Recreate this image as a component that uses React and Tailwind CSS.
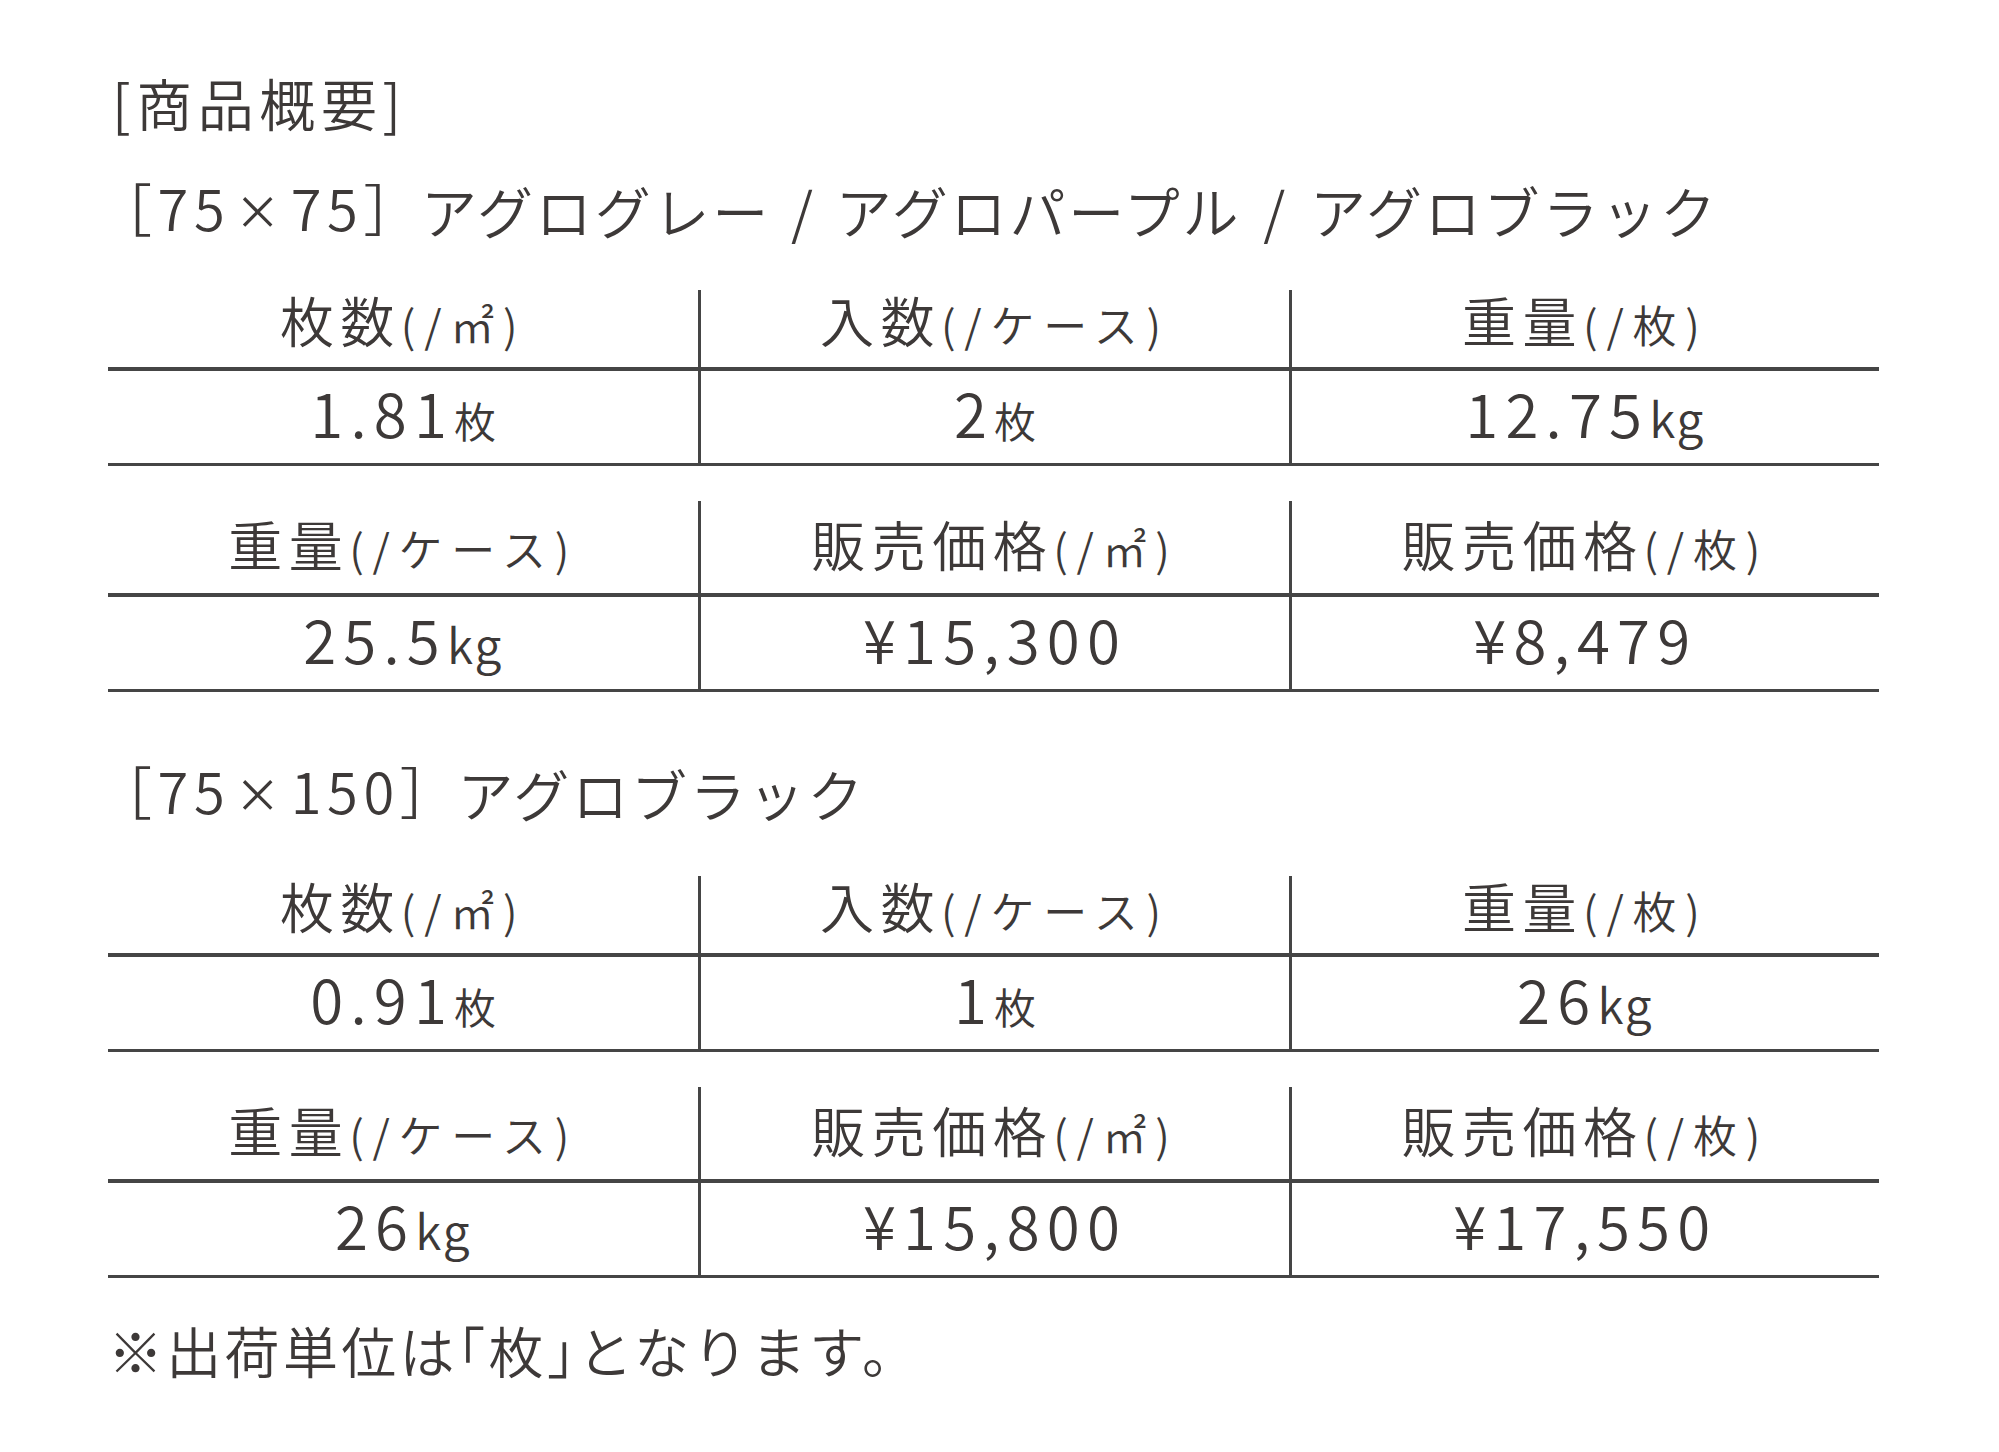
const line = 'bg-[#454545]';

const Label = ({ main, sub }) => (
  <span className="whitespace-nowrap leading-none">
    <span className="text-[54px] tracking-[0.12em]">{main}</span>
    <span className="text-[44px] tracking-[0.2em]">{sub}</span>
  </span>
);

const Value = ({ num, unit, unitClass }) => (
  <span className="whitespace-nowrap leading-none">
    <span className="text-[60px] tracking-[0.12em]">{num}</span>
    {unit && <span className={unitClass}>{unit}</span>}
  </span>
);

function Row({ cells, h, pad }) {
  return (
    <div className={`grid grid-cols-3 ${h}`}>
      {cells.map((c, i) => (
        <div
          key={i}
          className={`flex items-center justify-center ${pad} ${i ? 'border-l-[3px] border-[#454545]' : ''}`}
        >
          {c}
        </div>
      ))}
    </div>
  );
}

function Block({ head, vals, headH, headPad }) {
  return (
    <div>
      <Row cells={head} h={headH} pad={headPad} />
      <div className={`h-[4px] ${line}`} />
      <Row cells={vals} h="h-[92px]" pad="pb-[10px]" />
      <div className={`h-[3px] ${line}`} />
    </div>
  );
}

const mai = 'text-[42px]';
const kg = 'text-[48px] tracking-[0.04em]';

const table1 = [
  {
    head: [
      <Label main="枚数" sub="(/㎡)" />,
      <Label main="入数" sub="(/ケース)" />,
      <Label main="重量" sub="(/枚)" />,
    ],
    vals: [
      <Value num="1.81" unit="枚" unitClass={mai} />,
      <Value num="2" unit="枚" unitClass={mai} />,
      <Value num="12.75" unit="kg" unitClass={kg} />,
    ],
  },
  {
    head: [
      <Label main="重量" sub="(/ケース)" />,
      <Label main="販売価格" sub="(/㎡)" />,
      <Label main="販売価格" sub="(/枚)" />,
    ],
    vals: [
      <Value num="25.5" unit="kg" unitClass={kg} />,
      <Value num="¥15,300" />,
      <Value num="¥8,479" />,
    ],
  },
];

const table2 = [
  {
    head: table1[0].head,
    vals: [
      <Value num="0.91" unit="枚" unitClass={mai} />,
      <Value num="1" unit="枚" unitClass={mai} />,
      <Value num="26" unit="kg" unitClass={kg} />,
    ],
  },
  {
    head: table1[1].head,
    vals: [
      <Value num="26" unit="kg" unitClass={kg} />,
      <Value num="¥15,800" />,
      <Value num="¥17,550" />,
    ],
  },
];

function Table({ data }) {
  return (
    <div className="w-[1771px]">
      <Block head={data[0].head} vals={data[0].vals} headH="h-[77px]" headPad="pb-[18px]" />
      <div className="h-[35px]" />
      <Block head={data[1].head} vals={data[1].vals} headH="h-[92px]" headPad="pb-[6px]" />
    </div>
  );
}

const Times = () => (
  <span className="font-['Noto_Sans',sans-serif] text-[68px] mx-[8px] align-[-5px]">×</span>
);

export default function App() {
  return (
    <div className="min-h-screen bg-white text-[#3d3938] font-['Noto_Sans_CJK_JP','Noto_Sans',sans-serif] font-[350] pl-[108px] pt-[62px]">
      <div className="h-[80px] flex items-center pl-[4px] text-[56px] tracking-[0.1em] leading-none">
        [商品概要]
      </div>

      <div className="mt-[28px] h-[80px] flex items-center text-[56px] tracking-[0.05em] leading-none whitespace-nowrap">
        <span className="-ml-[12px] -mr-[4px] tracking-[0.1em]">［75<Times />75］</span>アグログレー<span className="mx-[20px]"> / </span>アグロパープル<span className="mx-[22px]"> / </span>アグロブラック
      </div>

      <div className="mt-[40px]">
        <Table data={table1} />
      </div>

      <div className="mt-[61px] h-[80px] flex items-center text-[56px] tracking-[0.05em] leading-none whitespace-nowrap">
        <span className="-ml-[12px] -mr-[4px] tracking-[0.1em]">［75<Times />150］</span>アグロブラック
      </div>

      <div className="mt-[43px]">
        <Table data={table2} />
      </div>

      <div className="mt-[31px] h-[80px] flex items-center text-[55px] tracking-[0.06em] leading-none whitespace-nowrap">
        ※出荷単位は｢枚｣となります。
      </div>
    </div>
  );
}
